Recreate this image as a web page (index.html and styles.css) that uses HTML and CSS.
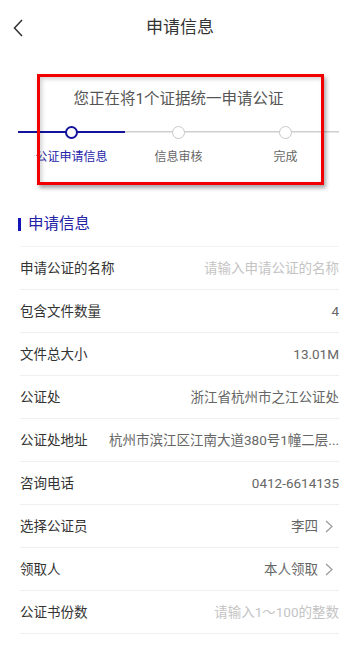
FILE: index.html
```html
<!DOCTYPE html>
<html lang="zh-CN">
<head>
<meta charset="utf-8">
<meta name="viewport" content="width=device-width, initial-scale=1">
<title>申请信息</title>
<link rel="stylesheet" href="styles.css">
</head>
<body>
<header class="topbar">
  <button class="back" aria-label="返回">
    <svg width="10" height="18" viewBox="0 0 10 18"><polyline points="9,1 1.5,9 9,17" fill="none" stroke="#333" stroke-width="1.5" stroke-linejoin="miter"/></svg>
  </button>
  <h1 class="title">申请信息</h1>
  <span class="spacer"></span>
</header>

<section class="progress">
  <p class="headline">您正在将1个证据统一申请公证</p>
  <ol class="steps">
    <li class="step done">
      <div class="track"><span class="dot"></span></div>
      <span class="step-label">公证申请信息</span>
    </li>
    <li class="step">
      <div class="track"><span class="dot"></span></div>
      <span class="step-label">信息审核</span>
    </li>
    <li class="step">
      <div class="track"><span class="dot"></span></div>
      <span class="step-label">完成</span>
    </li>
  </ol>
  <div class="highlight"></div>
</section>

<h2 class="section-title">申请信息</h2>

<ul class="form">
  <li class="row"><span class="label">申请公证的名称</span><span class="value placeholder">请输入申请公证的名称</span></li>
  <li class="row"><span class="label">包含文件数量</span><span class="value">4</span></li>
  <li class="row"><span class="label">文件总大小</span><span class="value">13.01M</span></li>
  <li class="row"><span class="label">公证处</span><span class="value">浙江省杭州市之江公证处</span></li>
  <li class="row"><span class="label">公证处地址</span><span class="value">杭州市滨江区江南大道380号1幢二层...</span></li>
  <li class="row"><span class="label">咨询电话</span><span class="value">0412-6614135</span></li>
  <li class="row"><span class="label">选择公证员</span><span class="value">李四</span><svg class="arrow" width="8" height="13" viewBox="0 0 8 13"><polyline points="1,1 7,6.5 1,12" fill="none" stroke="#9a9a9a" stroke-width="1.2"/></svg></li>
  <li class="row"><span class="label">领取人</span><span class="value">本人领取</span><svg class="arrow" width="8" height="13" viewBox="0 0 8 13"><polyline points="1,1 7,6.5 1,12" fill="none" stroke="#9a9a9a" stroke-width="1.2"/></svg></li>
  <li class="row"><span class="label">公证书份数</span><span class="value placeholder">请输入1～100的整数</span></li>
</ul>
</body>
</html>
```

FILE: styles.css
```css
* { box-sizing: border-box; }

html, body {
  margin: 0;
  padding: 0;
  background: #fff;
}

body {
  font-family: Roboto, "Noto Sans CJK SC", sans-serif;
  color: #333;
  width: 360px;
  overflow: hidden;
}

.topbar {
  height: 54px;
  display: grid;
  grid-template-columns: 48px 1fr 48px;
  align-items: center;
}

.back {
  border: 0;
  background: none;
  padding: 0 0 0 13px;
  height: 54px;
  display: flex;
  align-items: center;
  cursor: pointer;
}

.back svg { display: block; margin-top: 1px; }

.title {
  margin: 0;
  text-align: center;
  font-size: 17px;
  font-weight: 400;
  line-height: 24px;
  color: #333;
}

.progress {
  position: relative;
  margin-top: 20px;
  padding: 14px 21px 19px 18px;
}

.headline {
  margin: 0;
  text-align: center;
  font-size: 15.5px;
  line-height: 22px;
  color: #555;
}

.steps {
  list-style: none;
  margin: 15px 0 0;
  padding: 0;
  display: grid;
  grid-template-columns: repeat(3, 1fr);
}

.step {
  display: flex;
  flex-direction: column;
  align-items: center;
}

.track {
  width: 100%;
  height: 14px;
  display: flex;
  justify-content: center;
  align-items: center;
  background: linear-gradient(#cfcfcf, #cfcfcf) center / 100% 1.5px no-repeat;
}

.step.done .track {
  background: linear-gradient(#13139b, #13139b) center / 100% 2px no-repeat;
}

.dot {
  width: 13px;
  height: 13px;
  border-radius: 50%;
  background: #fff;
  border: 1.5px solid #c8c8c8;
}

.step.done .dot {
  border: 2px solid #13139b;
}

.step-label {
  margin-top: 9px;
  font-size: 12px;
  line-height: 18px;
  color: #666;
  white-space: nowrap;
}

.step.done .step-label { color: #2424a8; }

.highlight {
  position: absolute;
  left: 37px;
  top: 0;
  width: 287px;
  height: 111px;
  border: 3px solid #f20000;
  box-shadow: 2px 3px 4px rgba(0, 0, 0, 0.35), inset 2px 2px 4px rgba(0, 0, 0, 0.18);
  pointer-events: none;
}

.section-title {
  margin: 33px 0 0 18px;
  padding-left: 7px;
  border-left: 3px solid #1414b8;
  font-size: 15.5px;
  font-weight: 400;
  line-height: 13px;
  height: 13px;
  color: #2323a6;
  display: flex;
  align-items: center;
}

.form {
  list-style: none;
  margin: 15px 21px 0 20px;
  padding: 0;
  border-top: 1px solid #f3f3f3;
}

.row {
  height: 43px;
  display: flex;
  align-items: center;
  border-bottom: 1px solid #efefef;
  font-size: 13.5px;
  line-height: 20px;
}

.label {
  color: #333;
  white-space: nowrap;
  flex: none;
}

.value {
  flex: 1;
  min-width: 0;
  text-align: right;
  color: #666;
  white-space: nowrap;
  margin-left: 14px;
}

.value.placeholder { color: #c4c4c4; }

.arrow {
  flex: none;
  display: block;
  margin: 0 6px 0 7px;
}
```
